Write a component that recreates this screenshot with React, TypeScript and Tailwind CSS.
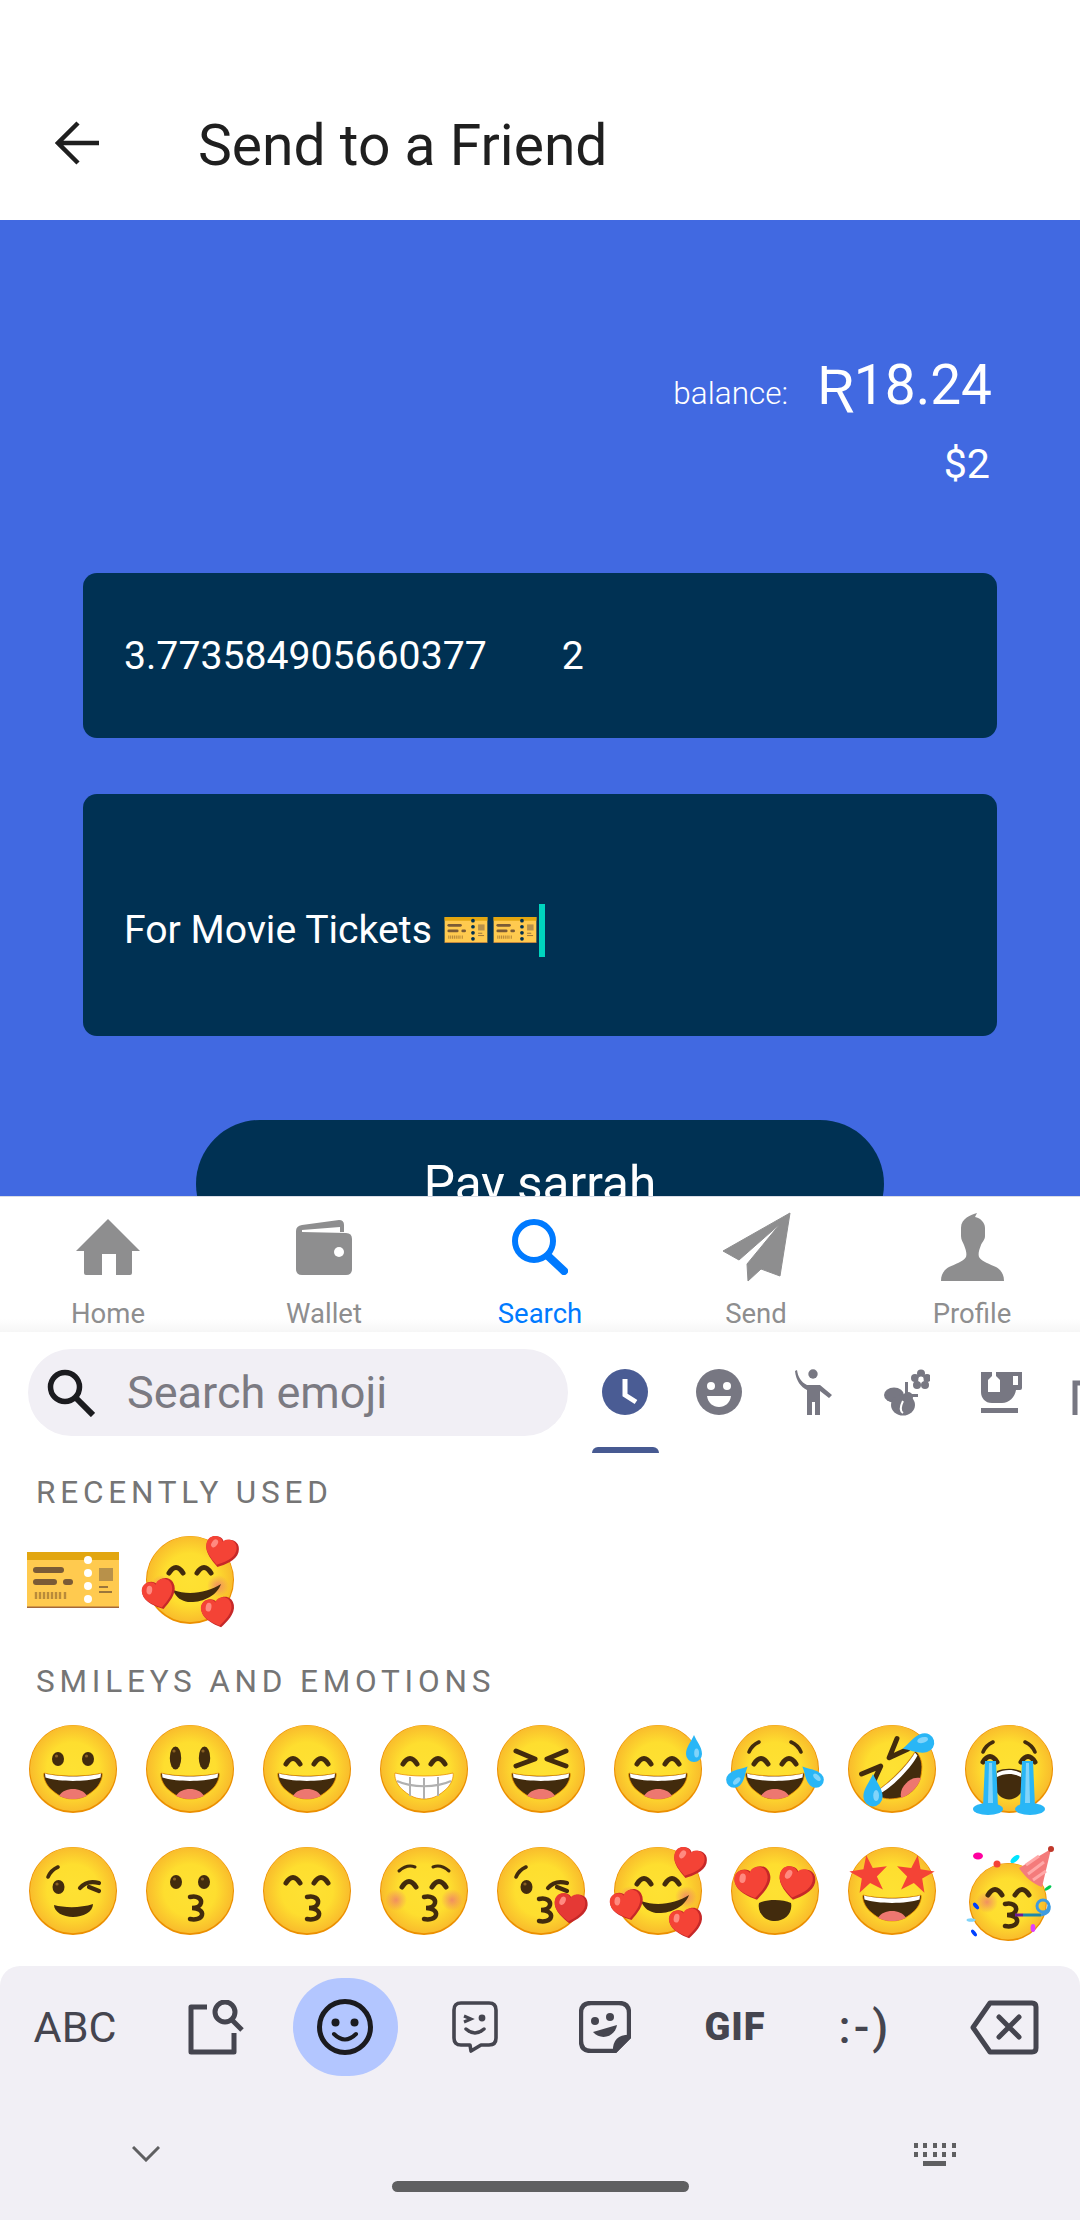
import type { ReactNode } from "react";

const DARK = "#422B0D";
const GRAY = "#8E8E8F";
const CAT = "#777782";
const INK = "#45454F";

function Arch({ x, y = 46 }: { x: number; y?: number }) {
  return <path d={`M${x - 7} ${y - 1} Q${x} ${y - 12} ${x + 7} ${y - 1}`} stroke={DARK} strokeWidth="5" strokeLinecap="round" fill="none" />;
}

function Eye({ x, y = 40, tall = false }: { x: number; y?: number; tall?: boolean }) {
  return (
    <g>
      <ellipse cx={x} cy={y} rx={tall ? 5.7 : 6} ry={tall ? 11.5 : 7} fill={DARK} />
      <circle cx={x - 1.5} cy={y - (tall ? 7 : 3)} r="1.6" fill="#896024" />
    </g>
  );
}

function Lips({ x = 54, y = 67 }: { x?: number; y?: number }) {
  return (
    <path
      transform={`translate(${x} ${y})`}
      d="M-4 -11 C3 -13 8 -9 7 -5 C6 -1 2 0 -2 0 C4 0 9 3 8 7 C7 11 1 12 -4 11"
      stroke={DARK}
      strokeWidth="4.5"
      strokeLinecap="round"
      fill="none"
    />
  );
}

function Mouth() {
  return (
    <g>
      <path d="M21 54 C36 58 64 58 79 54 C80 57 78 66 70 72 C63 78 57 80 50 80 C43 80 37 78 30 72 C22 66 20 57 21 54Z" fill={DARK} stroke="#EB8F00" strokeWidth="0.8" />
      <path d="M22 54.5 C36 58.5 64 58.5 78 54.5 L77.5 58.5 C64 63 36 63 22.5 58.5Z" fill="#FFF" />
      <path d="M36 77 C39 72 44 70 50 70 C56 70 61 72 64 77 C58 79.5 54 80 50 80 C46 80 42 79.5 36 77Z" fill="#ED7770" />
    </g>
  );
}

function Brows() {
  return (
    <g stroke={DARK} strokeWidth="3.6" strokeLinecap="round" fill="none">
      <path d="M24 33 Q27 26 34 23" />
      <path d="M76 33 Q73 26 66 23" />
    </g>
  );
}

function Blush({ x, y }: { x: number; y: number }) {
  return <circle cx={x} cy={y} r="11" fill="url(#blushFill)" />;
}

function Heart({ x, y, r = 0, s = 1.1, fill = "#F44336" }: { x: number; y: number; r?: number; s?: number; fill?: string }) {
  const d = "M0 -7 C-2 -13 -15 -13 -15 -2 C-15 6 -6 12 0 16 C6 12 15 6 15 -2 C15 -13 2 -13 0 -7Z";
  return (
    <g transform={`translate(${x} ${y}) rotate(${r}) scale(${s})`}>
      <path d={d} fill="#C62828" />
      <path d={d} fill={fill} transform="translate(-1.2 -0.6) scale(.93)" />
      <ellipse cx="-8" cy="-4" rx="2.6" ry="4" fill="#FF8A80" transform="rotate(20 -8 -4)" />
    </g>
  );
}

function Drop({ x, y, r = 0, s = 1 }: { x: number; y: number; r?: number; s?: number }) {
  return (
    <g transform={`translate(${x} ${y}) rotate(${r}) scale(${s})`}>
      <path d="M0 -15 C3 -8 8 -3 8 4 A8 8 0 1 1 -8 4 C-8 -3 -3 -8 0 -15Z" fill="#29B6F6" />
      <ellipse cx="2.6" cy="3" rx="2.4" ry="4.6" fill="#81D4FA" />
    </g>
  );
}

function Face({ children }: { children?: ReactNode }) {
  return (
    <g>
      <circle cx="50" cy="50" r="44" fill="#EB8F00" />
      <circle cx="50" cy="49.2" r="43" fill="url(#faceFill)" />
      {children}
    </g>
  );
}

function Emoji({ children }: { children: ReactNode }) {
  return (
    <svg viewBox="0 0 100 100" className="w-[100px] h-[100px] overflow-visible">
      {children}
    </svg>
  );
}

const STAR = "0,-20 4.7,-6.5 19,-6.2 7.6,2.5 11.8,16.2 0,8 -11.8,16.2 -7.6,2.5 -19,-6.2 -4.7,-6.5";

const smilingHearts = (
  <Face>
    <Blush x={22} y={56} />
    <Blush x={78} y={56} />
    <Arch x={36} y={44} />
    <Arch x={64} y={44} />
    <path d="M33 60 C50 66 68 62 81 54 C77 66 62 73 48 72 C42 71 36 68 33 60Z" fill={DARK} />
    <Heart x={82} y={20} r={15} />
    <Heart x={19} y={62} r={-15} />
    <Heart x={78} y={80} r={-10} />
  </Face>
);

const emojis: ReactNode[] = [
  <Face key="grinning">
    <Eye x={35} />
    <Eye x={65} />
    <Mouth />
  </Face>,
  <Face key="smiley">
    <Eye x={35.5} y={39} tall />
    <Eye x={64.5} y={39} tall />
    <Mouth />
  </Face>,
  <Face key="grin">
    <Arch x={36} />
    <Arch x={64} />
    <Mouth />
  </Face>,
  <Face key="beam">
    <Arch x={36} />
    <Arch x={64} />
    <path d="M21 54 C36 58 64 58 79 54 C80 57 78 66 70 72 C63 78 57 80 50 80 C43 80 37 78 30 72 C22 66 20 57 21 54Z" fill="#FFF" stroke="#EB8F00" strokeWidth="0.8" />
    <g stroke="#B0B0B0" strokeWidth="2" fill="none">
      <path d="M23 62 C38 69 62 69 77 62" />
      <path d="M36 58 V77 M50 59 V80 M64 58 V77" />
    </g>
  </Face>,
  <Face key="squint">
    <g stroke={DARK} strokeWidth="5" strokeLinecap="round" strokeLinejoin="round" fill="none">
      <path d="M25 32 L44 40 L25 47" />
      <path d="M75 32 L56 40 L75 47" />
    </g>
    <Mouth />
  </Face>,
  <Face key="sweat">
    <Arch x={36} />
    <Arch x={64} />
    <Mouth />
    <Drop x={86} y={31} s={1} />
  </Face>,
  <Face key="joy">
    <Brows />
    <Arch x={36} />
    <Arch x={64} />
    <Mouth />
    <Drop x={12} y={58} r={45} />
    <Drop x={88} y={58} r={-45} />
  </Face>,
  <g key="rofl">
    <Face />
    <g transform="rotate(-45 50 50)">
      <g stroke={DARK} strokeWidth="5" strokeLinecap="round" strokeLinejoin="round" fill="none">
        <path d="M25 32 L44 40 L25 47" />
        <path d="M75 32 L56 40 L75 47" />
      </g>
      <Mouth />
    </g>
    <Drop x={78} y={25} r={-105} s={1.2} />
    <Drop x={31} y={73} s={1.2} />
  </g>,
  <Face key="sob">
    <Brows />
    <path d="M38 52 C45 49 55 49 62 52 L64 70 C58 84 42 84 36 70Z" fill={DARK} />
    <path d="M38 54 C45 50 55 50 62 54 L62 58 C55 54 45 54 38 58Z" fill="#FFF" />
    <Arch x={31} y={44} />
    <Arch x={69} y={44} />
    <path d="M26 42 H37 L39 88 H24Z" fill="#29B6F6" />
    <path d="M63 42 H74 L76 88 H61Z" fill="#29B6F6" />
    <path d="M30 44 H33 L34 84 H29Z" fill="#81D4FA" />
    <path d="M67 44 H70 L71 84 H66Z" fill="#81D4FA" />
    <ellipse cx="29" cy="90" rx="15" ry="6" fill="#29B6F6" />
    <ellipse cx="71" cy="90" rx="15" ry="6" fill="#29B6F6" />
  </Face>,
  <Face key="wink">
    <path d="M25 36 Q28 29 35 26" stroke={DARK} strokeWidth="3.6" strokeLinecap="round" fill="none" />
    <Eye x={35.5} y={46} />
    <g stroke={DARK} strokeWidth="4.2" strokeLinecap="round" fill="none">
      <path d="M57 47 C62 41 69 40 76 42" />
      <path d="M66 46 L76 50" />
    </g>
    <path d="M31 64 C42 67 58 67 70 63 C70 71 60 76 50 76 C40 76 31 71 31 64Z" fill={DARK} />
  </Face>,
  <Face key="kissing">
    <Eye x={36} y={41} />
    <Eye x={64} y={41} />
    <Lips />
  </Face>,
  <Face key="kissingSmile">
    <Arch x={36} y={43} />
    <Arch x={64} y={43} />
    <Lips />
  </Face>,
  <Face key="kissingClosed">
    <Blush x={22} y={59} />
    <Blush x={78} y={59} />
    <path d="M25 30 Q33 23 41 26" stroke={DARK} strokeWidth="3" strokeLinecap="round" fill="none" />
    <path d="M75 30 Q67 23 59 26" stroke={DARK} strokeWidth="3" strokeLinecap="round" fill="none" />
    <Arch x={35} y={47} />
    <Arch x={65} y={47} />
    <Lips />
  </Face>,
  <Face key="kissingHeart">
    <path d="M25 36 Q28 29 35 26" stroke={DARK} strokeWidth="3.6" strokeLinecap="round" fill="none" />
    <Eye x={35.5} y={46} />
    <g stroke={DARK} strokeWidth="4.2" strokeLinecap="round" fill="none">
      <path d="M57 47 C62 41 69 40 76 42" />
      <path d="M66 46 L76 50" />
    </g>
    <Lips x={52} y={69} />
    <Heart x={80} y={65} r={5} fill="#E53935" />
  </Face>,
  <g key="smilingHearts">{smilingHearts}</g>,
  <Face key="heartEyes">
    <Heart x={28} y={40} r={-12} s={1.2} />
    <Heart x={72} y={40} r={12} s={1.2} />
    <path d="M34 62 C42 58 58 58 66 62 C68 72 60 80 50 80 C40 80 32 72 34 62Z" fill={DARK} />
  </Face>,
  <Face key="starEyes">
    <polygon points={STAR} fill="#F44336" transform="translate(27 34) rotate(-8)" />
    <polygon points={STAR} fill="#F44336" transform="translate(73 34) rotate(8)" />
    <Mouth />
  </Face>,
  <g key="party">
    <circle cx="49" cy="61" r="39" fill="#EB8F00" />
    <circle cx="49" cy="60.4" r="38" fill="url(#faceFill)" />
    <Blush x={28} y={61} />
    <Arch x={36} y={55} />
    <Arch x={63} y={55} />
    <Lips x={50} y={74} />
    <path d="M92 8 L60 27 C66 36 74 43 83 46Z" fill="#F47B7B" />
    <path d="M80 15 L67 24 M85 21 L69 33 M87 30 L74 39" stroke="#FFA8A8" strokeWidth="3" />
    <circle cx="92" cy="8" r="3" fill="#C0392B" />
    <ellipse cx="19" cy="15" rx="5" ry="3.5" fill="#FF00A0" />
    <circle cx="38" cy="23" r="3.5" fill="#F44336" />
    <ellipse cx="56" cy="18" rx="5.5" ry="2.6" fill="#00E5FF" transform="rotate(-40 56 18)" />
    <ellipse cx="89" cy="47" rx="4" ry="1.6" fill="#00C853" transform="rotate(-35 89 47)" />
    <ellipse cx="17" cy="65" rx="4" ry="2" fill="#0040FF" transform="rotate(50 17 65)" />
    <ellipse cx="12" cy="79" rx="4.5" ry="1.8" fill="#81D4FA" />
    <ellipse cx="15" cy="92" rx="4" ry="1.8" fill="#0040FF" transform="rotate(50 15 92)" />
    <ellipse cx="74" cy="87" rx="2.4" ry="4" fill="#E040FB" />
    <path d="M56 74 H64" stroke="#6A1B9A" strokeWidth="3" />
    <path d="M64 74 H82" stroke="#1E88A8" strokeWidth="3" />
    <circle cx="84" cy="65" r="6" stroke="#3E9BE0" strokeWidth="3" fill="none" />
    <path d="M82 74 C88 73 91 70 90 65" stroke="#3E9BE0" strokeWidth="3" fill="none" />
  </g>,
];

function Ticket({ hole, className }: { hole: string; className: string }) {
  return (
    <svg viewBox="0 0 92 56" className={className}>
      <rect width="92" height="56" rx="1" fill="#FFCA4F" />
      <rect width="92" height="8" fill="#E2A610" />
      <rect y="54.5" width="92" height="1.5" fill="#A5683A" />
      <rect x="6" y="15" width="31" height="6" rx="3" fill="#7B5B36" />
      <rect x="6" y="27" width="24" height="6" rx="3" fill="#7B5B36" />
      <rect x="36" y="27" width="10" height="6" rx="3" fill="#7B5B36" />
      <path d="M9 40 V47 M13 40 V47 M17 40 V47 M21 40 V47 M25 40 V47 M29 40 V47 M33 40 V47 M38 40 V47" stroke="#B98B3A" strokeWidth="2.4" />
      <circle cx="61" cy="8" r="4" fill={hole} />
      <circle cx="61" cy="21" r="4" fill={hole} />
      <circle cx="61" cy="34" r="4" fill={hole} />
      <circle cx="61" cy="47" r="4" fill={hole} />
      <rect x="72" y="16" width="14" height="13" fill="#B8914A" />
      <path d="M72 35 H81 M72 40 H85" stroke="#7B5B36" strokeWidth="1.6" />
    </svg>
  );
}

function TabIcon({ name }: { name: string }) {
  if (name === "Home") {
    return (
      <svg viewBox="0 0 64 56" className="w-16 h-14" fill={GRAY}>
        <path d="M32 0 L64 32 L56 32 L56 54 Q56 56 54 56 L40 56 L40 35 L26 35 L26 56 L10 56 Q8 56 8 54 L8 32 L0 32 Z" />
      </svg>
    );
  }
  if (name === "Wallet") {
    return (
      <svg viewBox="0 0 56 55" className="w-14 h-[55px]" fill={GRAY}>
        <path d="M6 5 L43 0 Q48 0 48 5 L48 12 L44 12 L44 7 L6 10 L6 12 L50 13 Q56 13 56 19 L56 49 Q56 55 50 55 L6 55 Q0 55 0 49 L0 11 Q0 6 6 5Z" />
        <circle cx="43" cy="32" r="5" fill="#FFF" />
      </svg>
    );
  }
  if (name === "Search") {
    return (
      <svg viewBox="0 0 56 56" className="w-14 h-14" fill="none" stroke="#007AFF">
        <circle cx="22" cy="22" r="19" strokeWidth="6" />
        <path d="M36 37 L52 52" strokeWidth="8" strokeLinecap="round" />
      </svg>
    );
  }
  if (name === "Send") {
    return (
      <svg viewBox="0 0 69 70" className="w-[69px] h-[70px]" fill={GRAY}>
        <path d="M68 1 L1 39 L17 48 L58 12 L25 52 L26 69 L39 57 L58 64 Z" stroke={GRAY} strokeWidth="1" strokeLinejoin="round" />
      </svg>
    );
  }
  return (
    <svg viewBox="0 0 63 70" className="w-[63px] h-[70px]" fill={GRAY}>
      <path d="M36 1 C30 3 20 6 20 16 L20 24 C20 28 22 30 23 33 C25 38 26 42 25 45 C22 50 14 52 8 55 C3 58 0 62 0 69 L63 69 C63 62 60 58 55 55 C49 52 41 50 38 45 C37 42 38 38 40 33 C41 30 44 28 44 24 L44 16 C44 10 39 6 34 5 Z" />
    </svg>
  );
}

function Category({ active, children }: { active?: boolean; children: ReactNode }) {
  return (
    <div className="w-[94px] shrink-0 flex flex-col items-center">
      <div className="h-[86px] flex items-center justify-center">{children}</div>
      <div className={active ? "mt-[12px] w-[67px] h-[6px] rounded-t-md bg-[#475A92]" : "mt-[12px] h-[6px]"} />
    </div>
  );
}

export default function App() {
  const tabs = ["Home", "Wallet", "Search", "Send", "Profile"];

  return (
    <div className="w-[1080px] h-[2220px] overflow-hidden bg-white flex flex-col font-['Roboto',sans-serif]">
      <svg className="absolute w-0 h-0">
        <defs>
          <radialGradient id="faceFill" cx="50%" cy="50%" r="50%">
            <stop offset="0%" stopColor="#FEE133" />
            <stop offset="60%" stopColor="#FEDE2F" />
            <stop offset="100%" stopColor="#F9BC2C" />
          </radialGradient>
          <radialGradient id="blushFill">
            <stop offset="0%" stopColor="#ED7770" stopOpacity="0.75" />
            <stop offset="100%" stopColor="#ED7770" stopOpacity="0" />
          </radialGradient>
        </defs>
      </svg>

      {/* App bar */}
      <header className="h-[220px] shrink-0 pt-[66px] pl-[55px] flex items-center">
        <svg viewBox="0 0 44 44" className="w-11 h-11" fill="none" stroke="#1F1F1F" strokeWidth="4.5">
          <path d="M44 22 H3 M23 2 L3 22 L23 42" />
        </svg>
        <h1 className="ml-[99px] mt-[5px] text-[57px] leading-none text-[#1F1F1F]">Send to a Friend</h1>
      </header>

      {/* Form */}
      <section className="h-[977px] shrink-0 overflow-hidden bg-[#4169E1] text-white border-b border-[#D8DCE6]">
        <div className="pt-[138px] pr-[88px] flex justify-end items-baseline">
          <span className="text-[31.5px] leading-none font-light">balance:</span>
          <span className="ml-[29px] text-[55px] leading-none">Ʀ18.24</span>
        </div>
        <div className="pr-[90px] mt-[31px] text-right text-[41.25px] leading-none">$2</div>
        <div className="mx-[83px] mt-[88px] h-[165px] rounded-[14px] bg-[#003153] flex items-center pl-[41px] pt-[2px] text-[39.2px]">
          <span>3.773584905660377</span>
          <span className="ml-[75px]">2</span>
        </div>
        <div className="mx-[83px] mt-[56px] h-[242px] rounded-[14px] bg-[#003153] flex items-center pl-[41px] pt-[30px] text-[39.2px]">
          <span>For Movie Tickets</span>
          <Ticket hole="#003153" className="ml-[12px] w-[44px] h-[26px]" />
          <Ticket hole="#003153" className="ml-[5px] w-[44px] h-[26px]" />
          <span className="ml-[2px] w-[6px] h-[53px] bg-[#00D4BE]" />
        </div>
        <div className="mx-[196px] mt-[84px] h-[128px] rounded-full bg-[#003153] flex items-center justify-center text-[49.5px]">Pay sarrah</div>
      </section>

      {/* Tabs */}
      <nav className="h-[135px] shrink-0 grid grid-cols-5 bg-gradient-to-b from-white from-[90%] to-[#F6F6F6]">
        {tabs.map((tab) => (
          <div key={tab} className="flex flex-col items-center pt-[15px]">
            <div className="h-[70px] flex items-center justify-center">
              <TabIcon name={tab} />
            </div>
            <span className={tab === "Search" ? "mt-[18px] text-[27.5px] leading-none text-[#007AFF]" : "mt-[18px] text-[27.5px] leading-none text-[#8E8E8F]"}>{tab}</span>
          </div>
        ))}
      </nav>

      {/* Emoji picker */}
      <div className="h-[634px] shrink-0 overflow-hidden">
        <div className="pt-[17px] pl-[28px] flex">
          <div className="w-[540px] h-[87px] shrink-0 rounded-full bg-[#F1EFF5] flex items-center pl-[19px]">
            <svg viewBox="0 0 48 48" className="w-12 h-12" fill="none" stroke="#1B1B1F">
              <circle cx="18" cy="18" r="14.5" strokeWidth="5.5" />
              <path d="M29 29 L46 46" strokeWidth="6" />
            </svg>
            <span className="ml-[32px] text-[45px] leading-none text-[#7B7A82]">Search emoji</span>
          </div>
          <div className="ml-[10px] flex">
            <Category active>
              <svg viewBox="0 0 46 46" className="w-[46px] h-[46px]">
                <circle cx="23" cy="23" r="23" fill="#4A5C94" />
                <path d="M23 10 V26 L34 33" stroke="#FFF" strokeWidth="5" fill="none" />
              </svg>
            </Category>
            <Category>
              <svg viewBox="0 0 46 46" className="w-[46px] h-[46px]">
                <circle cx="23" cy="23" r="23" fill={CAT} />
                <circle cx="15" cy="17" r="4" fill="#FFF" />
                <circle cx="31" cy="17" r="4" fill="#FFF" />
                <path d="M11 27 H35 C34 34 29 38 23 38 C17 38 12 34 11 27Z" fill="#FFF" />
              </svg>
            </Category>
            <Category>
              <svg viewBox="0 0 37 47" className="w-[37px] h-[47px]" fill={CAT}>
                <circle cx="18" cy="5" r="4.7" />
                <path d="M2 1 C3 8 6 13 12 16 L25 16 L37 26 L34 29 L25 22 L25 46 L20 46 L20 33 L17 33 L17 46 L12 46 L12 21 C6 18 1 12 0 2Z" />
              </svg>
            </Category>
            <Category>
              <svg viewBox="0 0 46 47" className="w-[46px] h-[47px]" fill={CAT}>
                <circle cx="37" cy="4.5" r="4" />
                <circle cx="43" cy="9" r="4" />
                <circle cx="41" cy="16" r="4" />
                <circle cx="33" cy="16" r="4" />
                <circle cx="31" cy="9" r="4" />
                <circle cx="37" cy="10" r="2.6" fill="#FFF" />
                <ellipse cx="10" cy="26" rx="10" ry="7.5" />
                <ellipse cx="19" cy="36" rx="12" ry="10.5" />
                <path d="M22 25 H34 V28 H22Z M21 13 L24 13 L24 26 L21 26Z" />
                <circle cx="24" cy="28" r="5" />
                <path d="M19 32 C16 38 16 42 19 44" stroke="#FFF" strokeWidth="2" fill="none" />
              </svg>
            </Category>
            <Category>
              <svg viewBox="0 0 41 41" className="w-[41px] h-[41px]" fill={CAT}>
                <path d="M0 0 H41 V16 Q41 18 39 18 H35 C34 25 28 31 21 31 H11 C4 31 0 26 0 20Z" />
                <path d="M7 0 V20 H19 V8 L15 4 V0 H11 V4 L7 8Z" fill="#FFF" />
                <rect x="32" y="4" width="5" height="9" fill="#FFF" />
                <rect y="36" width="37" height="5" />
              </svg>
            </Category>
            <Category>
              <svg viewBox="0 0 46 46" className="w-[46px] h-[46px]" fill="none" stroke={CAT} strokeWidth="5">
                <path d="M3 46 V14 H46" />
              </svg>
            </Category>
          </div>
        </div>

        <h2 className="mt-[28px] ml-[36px] text-[31.5px] leading-[24px] tracking-[4.8px] text-[#757575]">RECENTLY USED</h2>
        <div className="mt-[25px] ml-[14px] flex">
          <div className="w-[117px] h-[100px] flex items-center justify-center">
            <Ticket hole="#FFF" className="w-[92px] h-[56px]" />
          </div>
          <div className="w-[117px] flex justify-center">
            <Emoji>{smilingHearts}</Emoji>
          </div>
        </div>

        <h2 className="mt-[40px] ml-[36px] text-[31.5px] leading-[24px] tracking-[4.8px] text-[#757575]">SMILEYS AND EMOTIONS</h2>
        <div className="mt-[25px] ml-[14px] grid grid-cols-[repeat(9,117px)] gap-y-[22px]">
          {emojis.map((emoji, i) => (
            <div key={i} className="flex justify-center">
              <Emoji>{emoji}</Emoji>
            </div>
          ))}
        </div>
      </div>

      {/* Keyboard bar */}
      <div className="flex-1 rounded-t-[20px] bg-[#F1EFF5] pt-[12px]">
        <div className="flex items-center h-[98px] text-[#45454F]">
          <div className="w-[150px] flex justify-center text-[43px] leading-none">ABC</div>
          <div className="w-[130px] flex justify-center">
            <svg viewBox="0 0 57 55" className="w-[57px] h-[55px]" fill="none" stroke={INK} strokeWidth="5">
              <path d="M20 7 H4 V52 H47 V33" strokeLinejoin="round" />
              <circle cx="38" cy="12" r="10" />
              <path d="M45 20 L55 30" />
            </svg>
          </div>
          <div className="w-[130px] flex justify-center">
            <div className="w-[105px] h-[98px] rounded-full bg-[#B3C6FF] flex items-center justify-center">
              <svg viewBox="0 0 56 56" className="w-14 h-14" fill="none" stroke="#1B1B1F">
                <circle cx="28" cy="28" r="25.5" strokeWidth="5" />
                <circle cx="18.5" cy="23.5" r="4" fill="#1B1B1F" stroke="none" />
                <circle cx="37.5" cy="23.5" r="4" fill="#1B1B1F" stroke="none" />
                <path d="M17 35 Q28 46 39 35" strokeWidth="4" strokeLinecap="round" />
              </svg>
            </div>
          </div>
          <div className="w-[130px] flex justify-center">
            <svg viewBox="0 0 46 52" className="w-[46px] h-[52px]" fill="none" stroke={INK} strokeWidth="3.6">
              <path d="M9 2 H37 Q44 2 44 9 V37 Q44 44 37 44 H29 L19 50 L18 44 H9 Q2 44 2 37 V9 Q2 2 9 2Z" strokeLinejoin="round" />
              <path d="M12 15 L19 18 L12 21" strokeWidth="3" />
              <circle cx="30" cy="17" r="3.4" fill={INK} stroke="none" />
              <path d="M14 28 Q23 36 32 28" strokeWidth="3.4" strokeLinecap="round" />
            </svg>
          </div>
          <div className="w-[130px] flex justify-center">
            <svg viewBox="0 0 52 52" className="w-[52px] h-[52px]" fill="none" stroke={INK} strokeWidth="4.4">
              <path d="M12 2 H40 Q50 2 50 12 V36 L36 50 H12 Q2 50 2 40 V12 Q2 2 12 2Z" strokeLinejoin="round" />
              <path d="M36 50 C36 40 40 36 50 36 Z" fill={INK} />
              <circle cx="16" cy="20" r="4" fill={INK} stroke="none" />
              <circle cx="31" cy="16" r="4" fill={INK} stroke="none" />
              <path d="M14 31 L38 24 C36 36 22 40 14 31Z" fill={INK} stroke="none" />
            </svg>
          </div>
          <div className="w-[130px] flex justify-center text-[38px] leading-none font-black tracking-[1px]">GIF</div>
          <div className="w-[130px] flex justify-center text-[46px] leading-none font-medium tracking-[3px]">:-)</div>
          <div className="w-[148px] flex justify-center">
            <svg viewBox="0 0 69 55" className="w-[69px] h-[55px]" fill="none" stroke={INK} strokeWidth="5">
              <path d="M20 3 H62 Q66 3 66 7 V48 Q66 52 62 52 H20 L3 27.5Z" strokeLinejoin="round" />
              <path d="M29 17 L49 37 M49 17 L29 37" strokeLinecap="round" />
            </svg>
          </div>
        </div>
        <div className="mt-[54px] h-[48px] pl-[132px] pr-[124px] flex items-center justify-between">
          <svg viewBox="0 0 28 16" className="w-7 h-4" fill="none" stroke="#5F5F61" strokeWidth="3">
            <path d="M1 1 L14 14 L27 1" />
          </svg>
          <svg viewBox="0 0 42 23" className="w-[42px] h-[23px]" fill="#5F5F61">
            <path d="M0 0 H4 V5 H0Z M9 0 H13 V5 H9Z M19 0 H23 V5 H19Z M28 0 H32 V5 H28Z M38 0 H42 V5 H38Z M0 9 H4 V14 H0Z M9 9 H13 V14 H9Z M19 9 H23 V14 H19Z M28 9 H32 V14 H28Z M38 9 H42 V14 H38Z M9 18 H32 V23 H9Z" />
          </svg>
        </div>
        <div className="mt-[3px] mx-auto w-[297px] h-[11px] rounded-full bg-[#5F5F61]" />
      </div>
    </div>
  );
}
